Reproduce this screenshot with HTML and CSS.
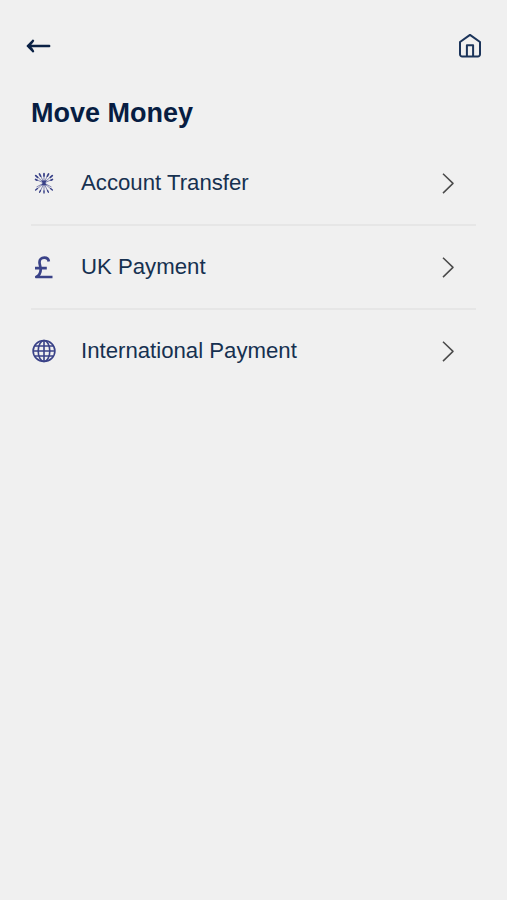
FILE: index.html
```html
<!DOCTYPE html>
<html lang="en">
<head>
<meta charset="UTF-8">
<title>Move Money</title>
<link rel="stylesheet" href="styles.css">
</head>
<body>
	<header class="topbar">
		<a class="back" href="#" aria-label="Back">
			<svg width="26" height="16" viewBox="0 0 26 16">
				<path d="M24.200 8H3M8 2.800Q6.300 6 2.800 8q3.500 2 5.200 5.200M7.800 3.200L2.800 8l5 4.800"/>
			</svg>
		</a>
		<a class="home" href="#" aria-label="Home">
			<svg width="24" height="26" viewBox="0 0 24 26">
				<path d="M2 9L12 1.900l10 7.100v12.300a2.200 2.200 0 0 1-2.200 2.200H4.200A2.200 2.200 0 0 1 2 21.300z"/>
				<path d="M8.900 23.500V12.300h6.200v11.200"/>
			</svg>
		</a>
	</header>
	<h1 class="title">Move Money</h1>
	<ul class="menu">
		<li>
			<a class="item" href="#">
				<svg class="icon burst" width="24" height="24" viewBox="0 0 24 24">
					<path class="ray" d="M12 12V3M12 12L8 3.500M12 12l4-8.500M12 12L4.500 5M12 12l7.500-7M12 12L4 8.500M12 12l8-3.500M12 12v9.500M12 12L8 21M12 12l4 9M12 12l-8 7M12 12l8 7M12 12l-7.500 4M12 12l7.500 4"/>
					<path class="tip" d="M12 5V2.500M8.600 5.200L7.400 2.900M15.400 5.200l1.200-2.300M5.600 6.400L3.700 4.600M18.400 6.400l1.900-1.800M5 9.200L3.600 8.500M19 9.200l1.400-.7"/>
					<path class="foot" d="M12 19.800v2.200M8.400 19.400l-.8 1.900M15.600 19.400l.8 1.900M5.400 17.500l-1.800 1.500M18.600 17.500l1.800 1.500"/>
					<path class="core" d="M9.300 9.500h5.400L13.200 12l1.500 2.300H9.300l1.500-2.300z"/>
				</svg>
				<span class="label">Account Transfer</span>
				<svg class="arrow" width="14" height="22" viewBox="0 0 14 22"><path d="M2 1.700l10 9.700L2 21.100"/></svg>
			</a>
		</li>
		<li>
			<a class="item" href="#">
				<svg class="icon pound" width="24" height="24" viewBox="0 0 24 24">
					<path d="M16.800 6.500C16.500 3.800 14.900 2.700 12.300 2.700 9.300 2.700 7.500 4.500 7.500 7.200c0 2.500 1.200 4.300 1.200 7.300 0 3.400-1.600 5.900-4.400 7.500h16.200M3 13.200h11.800"/>
				</svg>
				<span class="label">UK Payment</span>
				<svg class="arrow" width="14" height="22" viewBox="0 0 14 22"><path d="M2 1.700l10 9.700L2 21.100"/></svg>
			</a>
		</li>
		<li>
			<a class="item" href="#">
				<svg class="icon globe" width="24" height="24" viewBox="0 0 24 24">
					<ellipse cx="12" cy="12" rx="10.900" ry="10.500"/>
					<ellipse cx="12" cy="12" rx="5.800" ry="10.500"/>
					<path d="M12 1.500v21M1 12h22M3 7h18M3 17h18"/>
				</svg>
				<span class="label">International Payment</span>
				<svg class="arrow" width="14" height="22" viewBox="0 0 14 22"><path d="M2 1.700l10 9.700L2 21.100"/></svg>
			</a>
		</li>
	</ul>
</body>
</html>
```
FILE: styles.css
```css
body {
	margin: 0;
	min-height: 100vh;
	background: #f0f0f0;
	color: #163150;
	font-family: "Liberation Sans", Arial, sans-serif;
}
svg {
	display: block;
	fill: none;
	stroke-linejoin: round;
	flex-shrink: 0;
}

.topbar {
	display: flex;
	justify-content: space-between;
	align-items: center;
	height: 91px;
	padding: 0 25px;
}
.back svg {
	stroke: #0a2145;
	stroke-width: 2.4;
	stroke-linecap: round;
}
.home svg {
	stroke: #1b345a;
	stroke-width: 2;
}

.title {
	margin: 0;
	padding: 0 31px;
	height: 51px;
	line-height: 44px;
	font-size: 27px;
	color: #071d42;
}

.menu {
	list-style: none;
	margin: 0 31px;
	padding: 0;
}
.menu li {
	border-bottom: 2px solid #e6e6e6;
}
.menu li:last-child {
	border-bottom: none;
}
.item {
	display: flex;
	align-items: center;
	height: 82px;
	padding-right: 21px;
	padding-left: 1px;
	color: inherit;
	text-decoration: none;
}
.label {
	flex: 1;
	margin-left: 25px;
	font-size: 22.2px;
}

.icon {
	stroke: #3a4288;
}
.burst .ray {
	stroke-width: .6;
}
.burst .tip {
	stroke-width: 1.7;
	stroke-linecap: round;
}
.burst .foot {
	stroke-width: 1.3;
	stroke-linecap: round;
}
.burst .core {
	fill: #3a4288;
	stroke: none;
}
.pound {
	stroke-width: 2.7;
}
.globe {
	stroke-width: 1.6;
}
.arrow {
	stroke: #4a4a4a;
	stroke-width: 1.5;
}
```
